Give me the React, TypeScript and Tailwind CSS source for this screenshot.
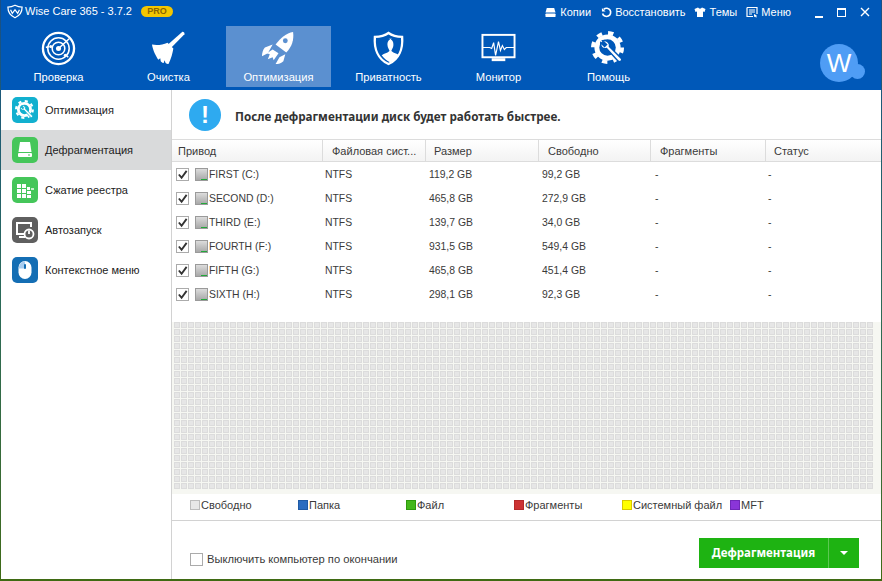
import React from "react"

const drives = [
  { name: "FIRST (C:)", size: "119,2 GB", free: "99,2 GB" },
  { name: "SECOND (D:)", size: "465,8 GB", free: "272,9 GB" },
  { name: "THIRD (E:)", size: "139,7 GB", free: "34,0 GB" },
  { name: "FOURTH (F:)", size: "931,5 GB", free: "549,4 GB" },
  { name: "FIFTH (G:)", size: "465,8 GB", free: "451,4 GB" },
  { name: "SIXTH (H:)", size: "298,1 GB", free: "92,3 GB" },
]

const legend = [
  { label: "Свободно", cls: "bg-[#e8e8e8] border-[#bdbdbd]" },
  { label: "Папка", cls: "bg-[#2a6cc0] border-[#1f5aa5]" },
  { label: "Файл", cls: "bg-[#44b81a] border-[#2f9a0c]" },
  { label: "Фрагменты", cls: "bg-[#cc3333] border-[#b52a2a]" },
  { label: "Системный файл", cls: "bg-[#ffff00] border-[#d8c800]" },
  { label: "MFT", cls: "bg-[#8a35d8] border-[#7028b8]" },
]

const cells = Array.from({ length: 2400 }, (_, i) => i)

// gear with wrench, used in the top nav and in the sidebar
const GearIcon = ({ className, cut = "#0058b8" }: { className?: string; cut?: string }) => (
  <svg viewBox="0 0 36 36" className={className} fill="none" stroke="white">
    <circle cx="17" cy="17" r="11" strokeWidth="5" />
    <circle cx="17" cy="17" r="15" strokeWidth="4" strokeDasharray="5.5 6.3" />
    <path d="M12 10l4 4-2 2-4-4c-1 4 2 7 6 6L28 31c2 2 5-1 3-3L19 16c1-4-3-7-7-6z" fill="white" stroke={cut} strokeWidth="1.5" />
  </svg>
)

const RadarIcon = () => (
  <svg viewBox="0 0 36 36" className="size-[35px]" fill="none" stroke="white">
    <circle cx="18" cy="18" r="16" strokeWidth="2.4" />
    <circle cx="18" cy="18" r="11" strokeWidth="1.6" />
    <circle cx="18" cy="18" r="6.5" strokeWidth="1.6" />
    <circle cx="18" cy="18" r="2.6" fill="white" stroke="none" />
    <path d="M18 18L29 8M8 16l-3 1M26 25l2 2" strokeWidth="1.6" />
    <circle cx="10" cy="16" r="1.6" fill="white" stroke="none" />
    <circle cx="25" cy="25" r="1.6" fill="white" stroke="none" />
  </svg>
)

const BroomIcon = () => (
  <svg viewBox="0 0 36 36" className="size-[35px]" fill="white">
    <path d="M32 1c1.200-.6 3 1 2.400 2.400L21 17l-3.500-3z" />
    <path d="M1 14c6 1 11 0 16-2l6 6c-1 5-2 10-5 16-1 0-2 0-3-1l-1-3-1 3c-1 0-2-1-3-2l-.5-3-2 1.500C5 26 2 20 1 14z" />
  </svg>
)

const RocketIcon = () => (
  <svg viewBox="0 0 36 36" className="size-[35px]" fill="white">
    <path d="M33 1c1 8-1 15-7 21l-11-8C20 7 26 2 33 1z" />
    <path d="M12 14L4 17c-2 2-3 6-3 9l6-3zM25 24l-2 7c-2 2-5 3-8 3l4-7z" />
    <path d="M12 19l6 4-5 7-1-3-5 2 2-5-3-1z" />
    <circle cx="25" cy="10" r="2.500" fill="#5b90d0" />
  </svg>
)

const ShieldIcon = () => (
  <svg viewBox="0 0 36 36" className="size-[35px]" fill="none">
    <path d="M18 2c4 3 9 4 14 4 1 12-3 23-14 28C7 29 3 18 4 6c5 0 10-1 14-4z" stroke="white" strokeWidth="2.400" />
    <path d="M18 8c3.500 0 5.500 3 5 7-.3 2-1 3.500-2 5 0 2 6 3 8 5-2 3-5 5.500-9 7.500-4-2-7-4.500-9-7.500 2-2 8-3 8-5-1-1.500-1.700-3-2-5-.5-4 1.500-7 5-7z" fill="white" />
  </svg>
)

const MonitorIcon = () => (
  <svg viewBox="0 0 36 36" className="size-[35px]" fill="none" stroke="white">
    <rect x="1.500" y="4" width="33" height="23" strokeWidth="2" />
    <path d="M2 17h7l2 1 2-6 2 13 3-14 2 9 2-5 2 4 2-2h8" strokeWidth="1.200" />
    <path d="M11 31h14v-3H11z" fill="white" stroke="none" />
  </svg>
)

const navItems = [
  { label: "Проверка", icon: <RadarIcon /> },
  { label: "Очистка", icon: <BroomIcon /> },
  { label: "Оптимизация", icon: <RocketIcon />, active: true },
  { label: "Приватность", icon: <ShieldIcon /> },
  { label: "Монитор", icon: <MonitorIcon /> },
  { label: "Помощь", icon: <GearIcon className="size-[35px]" /> },
]

const sideItems = [
  {
    label: "Оптимизация",
    bg: "bg-[#12b0cf]",
    icon: <GearIcon className="size-[20px]" cut="#12b0cf" />,
  },
  {
    label: "Дефрагментация",
    bg: "bg-[#45c65a]",
    active: true,
    icon: (
      <svg viewBox="0 0 18 18" className="size-[18px]" fill="white">
        <path d="M4 1h10l1.500 10h-13z" />
        <rect x="2" y="12" width="14" height="4" rx="1" />
        <rect x="12" y="13.500" width="2" height="1" fill="#45c65a" />
      </svg>
    ),
  },
  {
    label: "Сжатие реестра",
    bg: "bg-[#45c65a]",
    icon: (
      <svg viewBox="0 0 18 18" className="size-[18px]" fill="white">
        <rect x="1" y="3" width="4" height="4" />
        <rect x="6" y="3" width="4" height="4" />
        <rect x="11" y="6" width="3" height="3" />
        <rect x="1" y="8" width="4" height="4" />
        <rect x="6" y="8" width="4" height="4" />
        <rect x="11" y="10" width="4" height="3" />
        <rect x="1" y="13" width="4" height="4" />
        <rect x="6" y="13" width="4" height="4" />
        <rect x="11" y="14" width="4" height="3" />
        <rect x="15" y="7" width="3" height="2" opacity="0.7" />
      </svg>
    ),
  },
  {
    label: "Автозапуск",
    bg: "bg-[#5f5f5f]",
    icon: (
      <svg viewBox="0 0 20 20" className="size-[20px]" fill="none" stroke="white">
        <path d="M10 14H2V3h14v4" strokeWidth="2" />
        <path d="M4 17h6" strokeWidth="2" />
        <circle cx="14" cy="14" r="4.500" strokeWidth="1.800" />
        <path d="M14 10.500v3.500" strokeWidth="1.800" />
      </svg>
    ),
  },
  {
    label: "Контекстное меню",
    bg: "bg-[#146eb4]",
    icon: (
      <svg viewBox="0 0 18 20" className="h-[20px] w-[18px]">
        <rect x="2.500" y="1" width="13" height="18" rx="6.500" fill="white" />
        <path d="M9 1.500c-3 0-6 2-6 6v1h6z" fill="#a9cdf0" />
        <rect x="8" y="4" width="2" height="5" rx="1" fill="#146eb4" />
      </svg>
    ),
  },
]

const Checkbox = ({ checked }: { checked?: boolean }) => (
  <span className="flex size-[13px] shrink-0 items-center justify-center border border-[#ababab] bg-white">
    {checked && (
      <svg viewBox="0 0 12 12" className="size-[11px]" fill="none" stroke="#333" strokeWidth="2">
        <path d="M2 6l3 3.500L10.500 2" />
      </svg>
    )}
  </span>
)

const DiskIcon = () => (
  <span className="flex h-[13px] w-[13px] shrink-0 flex-col justify-end border border-[#9a9a9a] bg-gradient-to-b from-[#dcdcdc] to-[#a8a8a8]">
    <span className="ml-auto h-px w-[6px] bg-[#22a83a]" />
  </span>
)

export default function App() {
  return (
    <div
      className="h-[581px] w-[882px] overflow-hidden bg-gradient-to-b from-[#1a4f86] via-[#2b6a5a] to-[#3f6a12] pl-px text-[11px] text-[#3a3a3a]"
      style={{ fontFamily: '"Liberation Sans", "Noto Sans", sans-serif' }}
    >
      <div className="flex h-[579px] w-[880px] flex-col bg-white">
        {/* title bar + nav */}
        <header className="h-[90px] shrink-0 bg-[#0058b8] text-white">
          <div className="flex h-[26px] items-start">
            <div className="flex items-center pt-[3px] pl-[6px]">
              <svg viewBox="0 0 18 16" className="h-[15px] w-[16px]" fill="none" stroke="white" strokeWidth="1.400">
                <path d="M9 1c2 1 5 2 8 2 0 6-3 10-8 12C4 13 1 9 1 3c3 0 6-1 8-2z" />
                <path d="M4 6l2 4 3-4 3 4 2-4" />
              </svg>
              <span className="ml-[2px]">Wise Care 365 - 3.7.2</span>
              <span className="ml-[9px] flex h-[11px] w-[32px] items-center justify-center rounded-full bg-[#f3c600] text-[9px] font-bold text-[#8a6400]">
                PRO
              </span>
            </div>
            <div className="ml-auto flex items-center pt-[4px]">
              <svg viewBox="0 0 12 12" className="size-[11px]" fill="white">
                <path d="M2 1h8l1.500 5h-11z" />
                <rect x="0.500" y="7" width="11" height="4" rx="1" />
              </svg>
              <span className="ml-[4px]">Копии</span>
              <svg viewBox="0 0 12 12" className="ml-[10px] size-[11px]" fill="none" stroke="white" strokeWidth="1.800">
                <path d="M3 2.500a4.500 4.500 0 1 1-1.300 4.500" />
                <path d="M1 1v4h4" fill="white" stroke="none" />
              </svg>
              <span className="ml-[3px]">Восстановить</span>
              <svg viewBox="0 0 12 12" className="ml-[8px] size-[12px]" fill="white">
                <path d="M4 1.500L0.500 3l1 3 1.500-.5V11h6V5.500l1.500.5 1-3L8 1.500C7 3 5 3 4 1.500z" />
              </svg>
              <span className="ml-[4px]">Темы</span>
              <svg viewBox="0 0 12 12" className="ml-[9px] size-[12px]" fill="none" stroke="white">
                <path d="M1 1.500h10V8M1 1.500V10.500H7" strokeWidth="1.200" />
                <path d="M3 4h6M3 6h6M3 8h3" strokeWidth="1" />
                <path d="M8 8l3 1.500-1 .5 1 1-1 .5-1-1-1 .5z" fill="white" stroke="none" />
              </svg>
              <span className="ml-[3px]">Меню</span>
              <span className="mt-[9px] ml-[24px] h-[2px] w-[8px] bg-white" />
              <span className="ml-[14px] size-[9px] border border-t-2 border-white" />
              <svg viewBox="0 0 10 10" className="ml-[14px] size-[10px]" fill="none" stroke="white" strokeWidth="1.400">
                <path d="M1 1l8 8M9 1l-8 8" />
              </svg>
              <span className="w-[11px]" />
            </div>
          </div>
          <div className="flex items-start pl-[5px]">
            <nav className="flex gap-[5px]">
              {navItems.map((item) => (
                <div
                  key={item.label}
                  className={`flex h-[61px] w-[105px] flex-col items-center pt-[5px] ${item.active ? "bg-[#5b90d0]" : ""}`}
                >
                  {item.icon}
                  <span className="mt-[4px] text-[11.2px] leading-[14px]">{item.label}</span>
                </div>
              ))}
            </nav>
            <div className="relative mt-[18px] ml-[159px] flex size-[38px] items-center justify-center rounded-full bg-[#4f9df5] text-[26px] leading-none">
              W
              <span className="absolute top-[20px] left-[30px] size-[15px] rounded-full bg-[#4f9df5]" />
            </div>
          </div>
        </header>

        <div className="flex min-h-0 flex-1">
          {/* sidebar */}
          <aside className="w-[170px] shrink-0">
            {sideItems.map((item) => (
              <div
                key={item.label}
                className={`flex h-[40px] items-center pl-[11px] ${item.active ? "bg-[#d9dadb]" : ""}`}
              >
                <span className={`flex size-[26px] items-center justify-center rounded-[5px] ${item.bg}`}>{item.icon}</span>
                <span className="ml-[7px] text-[#222]">{item.label}</span>
              </div>
            ))}
          </aside>

          <main className="flex min-w-0 flex-1 flex-col border-l border-[#d2d2d2]">
            {/* banner */}
            <div className="flex h-[49px] shrink-0 items-center pl-[17px]">
              <span className="flex size-[32px] items-center justify-center rounded-full bg-[#2eaaf0] text-[24px] font-bold text-white">!</span>
              <span
                className="mt-[4px] ml-[14px] text-[11.7px] font-bold text-[#333]"
                style={{ fontFamily: '"Noto Sans", sans-serif' }}
              >
                После дефрагментации диск будет работать быстрее.
              </span>
            </div>

            {/* drive table */}
            <div className="grid h-[23px] shrink-0 grid-cols-[151px_103px_113px_112px_115px_115px] border-y border-[#dcdcdc] bg-gradient-to-b from-white to-[#f3f3f3] leading-[22px]">
              <div className="border-r border-[#dcdcdc] pl-[6px]">Привод</div>
              <div className="truncate border-r border-[#dcdcdc] pl-[9px]">Файловая сист...</div>
              <div className="border-r border-[#dcdcdc] pl-[8px]">Размер</div>
              <div className="border-r border-[#dcdcdc] pl-[9px]">Свободно</div>
              <div className="border-r border-[#dcdcdc] pl-[9px]">Фрагменты</div>
              <div className="pl-[8px]">Статус</div>
            </div>
            <div className="h-[160px] shrink-0 pt-px text-[10.4px]">
              {drives.map((d) => (
                <div key={d.name} className="grid h-[24px] grid-cols-[151px_103px_113px_112px_115px_115px] items-center">
                  <div className="flex items-center pl-[4px]">
                    <Checkbox checked />
                    <span className="ml-[6px]"><DiskIcon /></span>
                    <span className="ml-px">{d.name}</span>
                  </div>
                  <div className="pl-[2px]">NTFS</div>
                  <div className="pl-[3px]">{d.size}</div>
                  <div className="pl-[3px]">{d.free}</div>
                  <div className="pl-[4px]">-</div>
                  <div className="pl-[2px]">-</div>
                </div>
              ))}
            </div>

            {/* cluster map */}
            <div className="h-[172px] shrink-0 bg-[#f6f7f2] pl-[2px]">
              <div className="grid grid-cols-[repeat(100,6px)] gap-px">
                {cells.map((i) => (
                  <span key={i} className="size-[6px] border border-[#dcdcdc] bg-[#e6e6e6]" />
                ))}
              </div>
            </div>

            {/* legend */}
            <div className="flex h-[26px] shrink-0 items-center pb-[4px] pl-[18px]">
              {legend.map((l) => (
                <div key={l.label} className="flex w-[108px] items-center">
                  <span className={`size-[10px] shrink-0 border ${l.cls}`} />
                  <span className="ml-px whitespace-nowrap">{l.label}</span>
                </div>
              ))}
            </div>

            {/* footer */}
            <div className="flex flex-1 items-center border-t border-[#d2d2d2] pr-[22px] pl-[18px]">
              <div className="mt-[19px] flex items-center">
                <Checkbox />
                <span className="ml-[4px] text-[11.2px]">Выключить компьютер по окончании</span>
              </div>
              <button
                className="mt-[6px] ml-auto flex h-[30px] w-[160px] items-center bg-[#1eb312] text-[11.5px] font-bold text-white"
                style={{ fontFamily: '"Noto Sans", sans-serif' }}
              >
                <span className="w-[129px] text-center">Дефрагментация</span>
                <span className="flex h-full flex-1 items-center justify-center border-l border-[#5cc852]">
                  <span className="border-x-[4px] border-t-[4px] border-x-transparent border-t-white" />
                </span>
              </button>
            </div>
          </main>
        </div>
      </div>
    </div>
  )
}
